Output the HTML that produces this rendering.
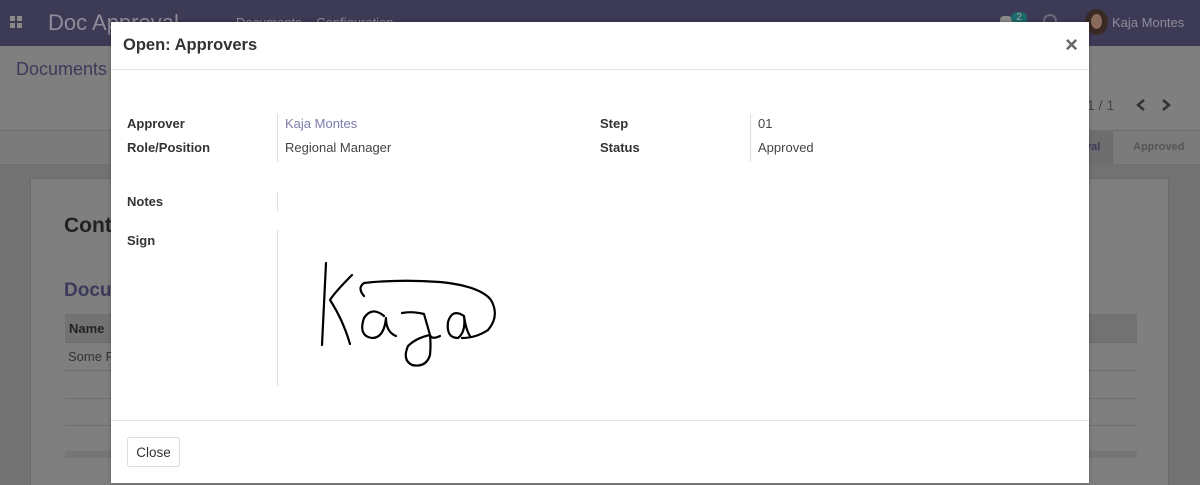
<!DOCTYPE html>
<html><head><meta charset="utf-8"><style>
*{box-sizing:border-box;margin:0;padding:0}
html,body{width:1200px;height:485px;overflow:hidden}
body{font-family:"Liberation Sans",sans-serif;background:#727272;position:relative}
.nav{position:absolute;left:0;top:0;width:1200px;height:46px;background:#3c3a55}
.cp{position:absolute;left:0;top:46px;width:1200px;height:85px;background:#7f7f7f;border-bottom:1px solid #6e6e6e}
.sb{position:absolute;left:0;top:131px;width:1200px;height:34px;background:#7b7b7b;border-bottom:1px solid #6e6e6e}
.sheet{position:absolute;left:30px;top:178px;width:1139px;height:307px;background:#7f7f7f;border:1px solid #6a6a6a;border-bottom:none}
.modal{position:absolute;left:111px;top:22px;width:978px;height:461px;background:#fff;box-shadow:0 0 4px rgba(0,0,0,.3)}
.mh{height:48px;border-bottom:1px solid #e2e2e2;padding:14px 12px;font-weight:bold;font-size:16.5px;color:#333}
.x{position:absolute;right:11px;top:10px;font-size:22px;color:#666;font-weight:bold}
.lbl{position:absolute;font-weight:bold;font-size:13px;color:#333}
.val{position:absolute;font-size:13px;color:#444}
.vl{position:absolute;width:1px;background:#ddd}
.mf{position:absolute;left:0;top:398px;width:978px;border-top:1px solid #e2e2e2}
.btn{position:absolute;left:16px;top:415px;width:53px;height:30px;border:1px solid #ddd;border-radius:3px;font-size:13.5px;color:#333;text-align:center;line-height:29px}
</style></head><body>
<div class="nav">
 <div style="position:absolute;left:10px;top:16px;width:12px;height:12px;display:grid;grid-template-columns:5px 5px;gap:2px"><i style="background:#8a8a8a"></i><i style="background:#8a8a8a"></i><i style="background:#8a8a8a"></i><i style="background:#8a8a8a"></i></div>
 <div style="position:absolute;left:48px;top:10px;font-size:22px;color:#8e8d99">Doc Approval</div>
 <div style="position:absolute;left:236px;top:15px;font-size:13px;color:#8e8d99">Documents &nbsp;&nbsp; Configuration</div>
 <div style="position:absolute;left:1000px;top:16px;width:12px;height:10px;background:#8a8a8a;border-radius:4px"></div>
 <div style="position:absolute;left:1011px;top:12px;width:16px;height:12px;background:#1e6a6a;border-radius:6px;color:#aaa;font-size:10px;text-align:center">2</div>
 <div style="position:absolute;left:1043px;top:14px;width:14px;height:14px;border:2px solid #6a6a7a;border-radius:50%"></div>
 <div style="position:absolute;left:1085px;top:9px;width:23px;height:26px;background:#3a2a24;border-radius:50%"><div style="margin:5px 6px;width:11px;height:15px;background:#8a6a5a;border-radius:50%"></div></div>
 <div style="position:absolute;left:1112px;top:15px;font-size:13px;color:#8e8d99">Kaja Montes</div>
</div>
<div class="cp"><div style="position:absolute;left:16px;top:13px;font-size:18px;color:#3c3a5a">Documents</div>
 <div style="position:absolute;left:1087px;top:51px;font-size:14px;color:#444">1 / 1</div>
 <svg style="position:absolute;left:1134px;top:52px" width="40" height="14" fill="none" stroke="#333" stroke-width="2.5"><path d="M10 2 L4 7 L10 12"/><path d="M29 2 L35 7 L29 12"/></svg></div>
<div class="sb"><div style="position:absolute;left:1088px;top:0;width:25px;height:34px;background:#6e6e6e"></div>
 <div style="position:absolute;left:1085px;top:10px;font-size:11px;font-weight:bold;color:#3c3a5a">val</div>
 <div style="position:absolute;left:1133px;top:10px;font-size:11px;font-weight:bold;color:#555">Approved</div></div>
<div class="sheet">
 <div style="position:absolute;left:33px;top:35px;font-size:21px;font-weight:bold;color:#222">Cont</div>
 <div style="position:absolute;left:33px;top:101px;font-size:19px;font-weight:bold;color:#3c3a5a">Docu</div>
 <div style="position:absolute;left:34px;top:135px;width:1072px;height:29px;background:#727272;border-bottom:1px solid #6a6a6a"><span style="position:absolute;left:4px;top:7px;font-size:13px;font-weight:bold;color:#222">Name</span></div>
 <div style="position:absolute;left:37px;top:170px;font-size:13px;color:#333">Some P</div>
 <div style="position:absolute;left:34px;top:191px;width:1072px;border-top:1px solid #6e6e6e"></div>
 <div style="position:absolute;left:34px;top:219px;width:1072px;border-top:1px solid #6e6e6e"></div>
 <div style="position:absolute;left:34px;top:246px;width:1072px;border-top:1px solid #6e6e6e"></div>
 <div style="position:absolute;left:34px;top:272px;width:1072px;height:7px;background:#767676"></div>
</div>
<div class="modal">
 <div class="mh">Open: Approvers</div><div class="x">×</div>
 <div class="lbl" style="left:16px;top:94px">Approver</div>
 <div class="lbl" style="left:16px;top:118px">Role/Position</div>
 <div class="vl" style="left:166px;top:92px;height:48px"></div>
 <div class="val" style="left:174px;top:94px;color:#7c7bad">Kaja Montes</div>
 <div class="val" style="left:174px;top:118px">Regional Manager</div>
 <div class="lbl" style="left:489px;top:94px">Step</div>
 <div class="lbl" style="left:489px;top:118px">Status</div>
 <div class="vl" style="left:639px;top:92px;height:48px"></div>
 <div class="val" style="left:647px;top:94px">01</div>
 <div class="val" style="left:647px;top:118px">Approved</div>
 <div class="lbl" style="left:16px;top:172px">Notes</div>
 <div class="vl" style="left:166px;top:170px;height:19px"></div>
 <div class="lbl" style="left:16px;top:211px">Sign</div>
 <div class="vl" style="left:166px;top:208px;height:156px"></div>
 <svg style="position:absolute;left:169px;top:218px" width="240" height="140" viewBox="280 240 240 140" fill="none" stroke="#000" stroke-width="2.2" stroke-linecap="round" stroke-linejoin="round">
  <path d="M326 263 L322 345"/>
  <path d="M352 275 Q335 292 330 300 Q343 320 350 344"/>
  <path d="M364 296 Q357 288 364 283 Q400 279 440 282 Q480 286 491 300 Q500 316 488 330 Q476 338 462 338"/>
  <path d="M384 316 Q372 306 364 318 Q358 336 372 338 Q384 338 386 318 Q386 332 396 336"/>
  <path d="M402 313 Q412 311 424 314 L430 335 Q416 338 408 346 Q402 360 412 365 Q426 368 430 355 Q431 345 430 335 Q432 340 440 336"/>
  <path d="M464 316 Q452 308 448 322 Q446 338 458 338 Q466 332 464 316 Q466 330 470 336"/>
 </svg>
 <div class="mf"></div>
 <div class="btn">Close</div>
</div>
</body></html>
